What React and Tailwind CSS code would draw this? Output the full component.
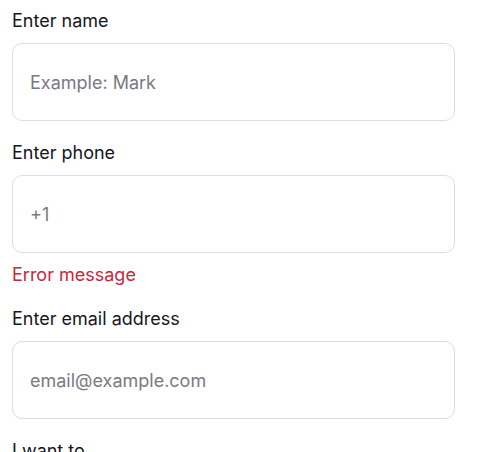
import React from "react";

function Field({ label, placeholder, error, type = "text" }) {
  return (
    <div className="flex flex-col">
      <label className="block text-[18px] leading-6 text-[#16161d] mb-[10px]">
        {label}
      </label>
      <input
        type={type}
        placeholder={placeholder}
        className="w-full h-[78px] px-[17px] border border-[#dcdce6] rounded-[10px] text-[18px] text-[#16161d] placeholder:text-[#7a7a82] bg-white focus:outline-none"
      />
      {error && (
        <p className="text-[18px] leading-6 text-[#c5283d] mt-[10px]">{error}</p>
      )}
    </div>
  );
}

export default function App() {
  return (
    <div
      className="bg-white min-h-screen w-[467px] pl-3 pr-[12px] pt-[9px] flex flex-col gap-[20px]"
      style={{ fontFamily: "Inter, 'Open Sans', sans-serif" }}
    >
      <Field label="Enter name" placeholder="Example: Mark" />
      <Field label="Enter phone" placeholder="+1" type="tel" error="Error message" />
      <Field label="Enter email address" placeholder="email@example.com" type="email" />
      <label className="block text-[18px] leading-6 text-[#16161d]">I want to</label>
    </div>
  );
}
